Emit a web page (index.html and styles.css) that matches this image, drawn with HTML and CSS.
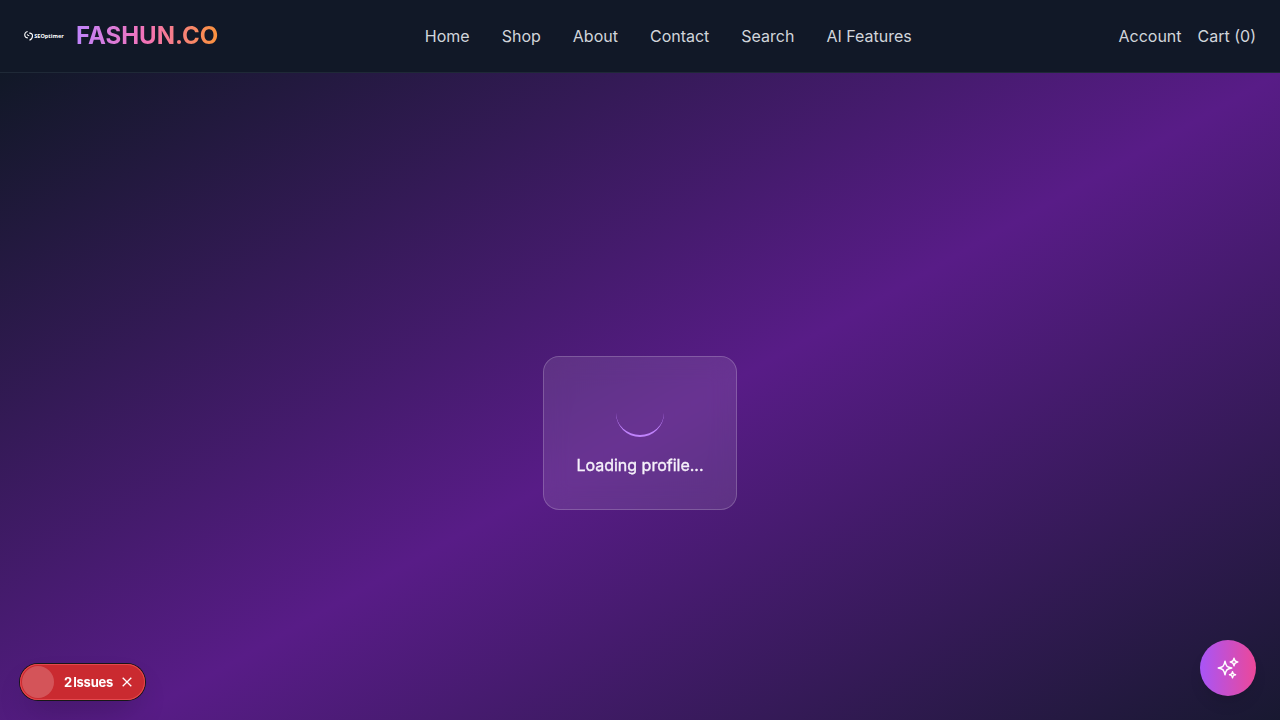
FILE: index.html
```html
<!DOCTYPE html>
<html lang="en">
<head>
<meta charset="utf-8">
<title>FASHUN.CO</title>
<link rel="stylesheet" href="styles.css">
</head>
<body>
<header class="header">
  <div class="brand">
    <svg class="logo" width="40" height="40" viewBox="0 0 40 40">
      <g fill="none" stroke="#fff" stroke-width="1.1">
        <path d="M3.600 15.500C1.200 16 .2 18.200 1 20.200c.5 1.200 1.500 1.700 2.800 1.700"/>
        <path d="M3.300 18.300c.3 1 1 1.400 2 1.400"/>
        <path d="M5.200 17.200c2-.3 3.300.9 3.300 2.500 0 2.200-1.100 3.700-3 4.600"/>
      </g>
      <text class="logo-text" x="10.200" y="22" textLength="29.600" lengthAdjust="spacingAndGlyphs">SEOptimer</text>
    </svg>
    <span class="brand-name">FASHUN.CO</span>
  </div>
  <nav class="nav">
    <a>Home</a><a>Shop</a><a>About</a><a>Contact</a><a>Search</a><a>AI Features</a>
  </nav>
  <div class="actions"><a>Account</a><a>Cart (0)</a></div>
</header>
<main class="main">
  <div class="card">
    <div class="spinner"></div>
    <p class="message">Loading profile...</p>
  </div>
</main>
<div class="issues">
  <span class="mark"></span>
  <span class="issues-label">2 Issues</span>
  <svg class="close" width="14" height="14" viewBox="0 0 14 14"><path d="M2.700 2.700l8.600 8.600M11.300 2.700l-8.600 8.600" stroke="#fff" stroke-width="1.300" fill="none"/></svg>
</div>
<button class="fab" aria-label="AI assistant">
  <svg width="24" height="24" viewBox="0 0 24 24" fill="none" stroke="#fff" stroke-width="1.5" stroke-linecap="round" stroke-linejoin="round"><path d="M9.813 15.904L9 18.75l-.813-2.846a4.5 4.5 0 00-3.09-3.09L2.25 12l2.846-.813a4.5 4.5 0 003.09-3.09L9 5.25l.813 2.846a4.5 4.5 0 003.09 3.09L15.75 12l-2.846.813a4.5 4.5 0 00-3.09 3.09zM18.259 8.715L18 9.75l-.259-1.035a3.375 3.375 0 00-2.455-2.456L14.25 6l1.036-.259a3.375 3.375 0 002.455-2.456L18 2.25l.259 1.035a3.375 3.375 0 002.456 2.456L21.75 6l-1.035.259a3.375 3.375 0 00-2.456 2.456zM16.894 20.567L16.5 21.75l-.394-1.183a2.25 2.25 0 00-1.423-1.423L13.5 18.75l1.183-.394a2.25 2.25 0 001.423-1.423l.394-1.183.394 1.183a2.25 2.25 0 001.423 1.423l1.183.394-1.183.394a2.25 2.25 0 00-1.423 1.423z"/></svg>
</button>
</body>
</html>
```

FILE: styles.css
```css
* { box-sizing: border-box; }
body {
  display: flex;
  flex-direction: column;
  margin: 0;
  height: 720px;
  overflow: hidden;
  background: #111827;
  font: 16px/24px Inter, sans-serif;
}
.header {
  display: flex;
  flex: none;
  align-items: center;
  justify-content: space-between;
  height: 73px;
  padding: 0 24px;
  background: #111827;
  border-bottom: 1px solid #1f2937;
  color: #d1d5db;
}
.brand { display: flex; align-items: center; gap: 12px; }
.logo { overflow: visible; }
.logo-text { font: 700 6px "Open Sans", sans-serif; fill: #fff; }
.brand-name {
  font-size: 24px;
  line-height: 32px;
  font-weight: 700;
  color: transparent;
  background: linear-gradient(to right, #c084fc, #f472b6, #fb923c);
  -webkit-background-clip: text;
  background-clip: text;
}
.nav { display: flex; gap: 32px; }
.actions { display: flex; gap: 16px; }
.main {
  display: flex;
  flex: 1;
  justify-content: center;
  align-items: flex-start;
  padding-top: 283px;
  background: linear-gradient(to bottom right, #111827, #581c87, #111827) 0 0 / 1280px 720px no-repeat;
}
.card {
  padding: 32px;
  border: 1px solid rgba(255, 255, 255, .2);
  border-radius: 16px;
  background: rgba(255, 255, 255, .1);
  backdrop-filter: blur(12px);
}
.spinner {
  width: 48px;
  height: 48px;
  margin: 0 auto 16px;
  border-radius: 50%;
  border-bottom: 2px solid #c084fc;
}
.message { margin: 0; color: #f6f1fa; text-align: center; -webkit-text-stroke: .35px #f6f1fa; }
.issues {
  position: fixed;
  left: 20px;
  bottom: 20px;
  display: flex;
  align-items: center;
  width: 125px;
  height: 36px;
  padding-left: 2px;
  border-radius: 18px;
  background: #ca2a30;
  box-shadow: 0 0 0 1px #171717, inset 0 0 0 1px #e5484d, 0 16px 32px -8px rgba(0, 0, 0, .24);
}
.mark { width: 32px; height: 32px; border-radius: 50%; background: rgba(255, 255, 255, .2); }
.issues-label { width: 50px; margin: -1px 0 0 10px; color: #fff; font-size: 13px; font-weight: 700; letter-spacing: -.25px; word-spacing: -1.6px; line-height: 22px; white-space: nowrap; }
.close { margin-left: 6px; }
.fab {
  position: fixed;
  right: 24px;
  bottom: 24px;
  display: flex;
  align-items: center;
  justify-content: center;
  width: 56px;
  height: 56px;
  padding: 0;
  border: 0;
  border-radius: 50%;
  background: linear-gradient(to right, #a855f7, #ec4899);
  box-shadow: 0 10px 15px -3px rgba(0, 0, 0, .1), 0 4px 6px -4px rgba(0, 0, 0, .1);
}
```
